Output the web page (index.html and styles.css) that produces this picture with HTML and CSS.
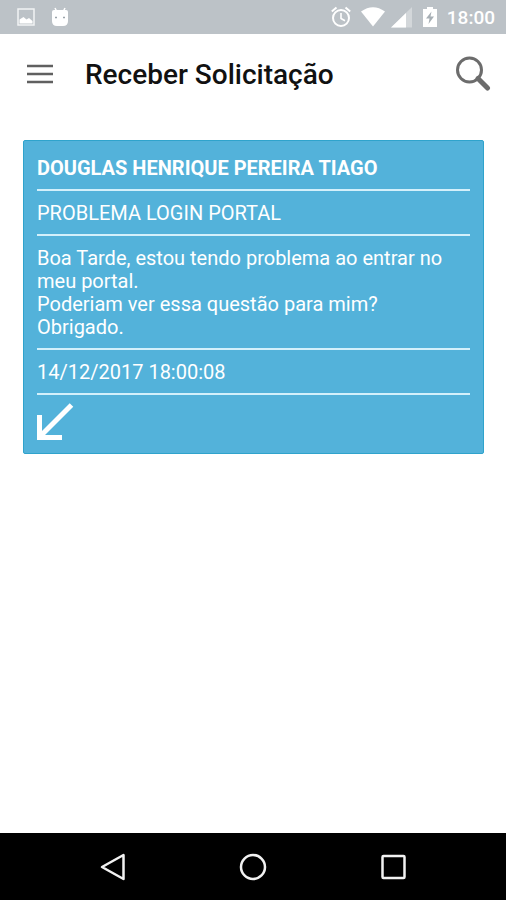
FILE: index.html
```html
<!DOCTYPE html>
<html lang="pt-BR">
<head>
<meta charset="utf-8">
<meta name="viewport" content="width=device-width, initial-scale=1">
<title>Receber Solicitação</title>
<link rel="stylesheet" href="styles.css">
</head>
<body>
<div class="status-bar">
  <div class="status-group notices">
    <svg width="18" height="18" viewBox="0 0 18 18" aria-hidden="true"><rect x="1" y="1" width="16" height="16" fill="none" stroke="currentColor" stroke-width="1.5" opacity=".8"/><path d="M2.500 15.500v-4l4-2.500 3 2.500 2.500-1.500 3.500 3v2.500z" fill="currentColor"/></svg>
    <svg width="18" height="20" viewBox="0 0 18 20" aria-hidden="true"><path d="M4 1l2 4M14 1l-2 4" stroke="currentColor" stroke-width="1.500"/><path d="M1 5q0-2 2-2h12q2 0 2 2v9q0 5-5 5H6q-5 0-5-5z" fill="currentColor"/><path d="M4 10.500h2M12 10.500h2" stroke="#9aa3aa" stroke-width="1.500"/></svg>
  </div>
  <div class="status-group">
    <svg width="20" height="22" viewBox="0 0 20 22" aria-hidden="true"><g fill="none" stroke="currentColor" stroke-width="2"><circle cx="10" cy="12" r="8"/><path d="M10 7v5.500l4 2.300" stroke-width="1.600"/><path d="M.8 5.500L5.500 1.500M19.200 5.500L14.500 1.500"/></g></svg>
    <svg class="wifi" width="24" height="20" viewBox="0 0 24 20" aria-hidden="true"><path d="M0 4.500Q12-4 24 4.500L12 19.500z" fill="currentColor"/></svg>
    <svg class="signal" width="22" height="21" viewBox="0 0 22 21" aria-hidden="true"><path d="M0 20.500L21 0v20.500z" fill="currentColor" opacity=".35"/><path d="M0 20.500L15 6v14.500z" fill="currentColor"/></svg>
    <svg class="battery" width="14" height="20" viewBox="0 0 14 20" aria-hidden="true"><path d="M4 0h6v2h4v18H0V2h4z" fill="currentColor"/><path d="M8.500 4.500L3 11.500h3.500L5.500 17 11 9.500H7.500z" fill="#a7afb5"/></svg>
    <time class="clock">18:00</time>
  </div>
</div>

<header class="app-bar">
  <button class="icon-button" type="button" aria-label="Menu">
    <svg width="26" height="20" viewBox="0 0 26 20"><path d="M0 2h26M0 10h26M0 18h26" stroke="#606060" stroke-width="2.400"/></svg>
  </button>
  <h1>Receber Solicitação</h1>
  <button class="icon-button" type="button" aria-label="Pesquisar">
    <svg width="36" height="36" viewBox="0 0 36 36"><g fill="none" stroke="#6c6c6c"><circle cx="14.500" cy="14" r="12" stroke-width="3"/><path d="M23 22.500L32.500 32" stroke-width="5" stroke-linecap="round"/></g></svg>
  </button>
</header>

<main>
  <article class="card">
    <h2 class="row name">DOUGLAS HENRIQUE PEREIRA TIAGO</h2>
    <p class="row">PROBLEMA LOGIN PORTAL</p>
    <p class="row">Boa Tarde, estou tendo problema ao entrar no meu portal.<br>Poderiam ver essa questão para mim?<br>Obrigado.</p>
    <p class="row"><time datetime="2017-12-14T18:00:08">14/12/2017 18:00:08</time></p>
    <button class="icon-button receive" type="button" aria-label="Receber">
      <svg width="37" height="37" viewBox="0 0 37 37"><path d="M34.500 2L4 32.500M2.500 12v22.500H25" fill="none" stroke="#fff" stroke-width="5"/></svg>
    </button>
  </article>
</main>

<nav class="system-nav" aria-label="Sistema">
  <button class="icon-button" type="button" aria-label="Voltar"><svg width="28" height="28" viewBox="0 0 28 28"><path d="M24.500 2v24L3 14z"/></svg></button>
  <button class="icon-button" type="button" aria-label="Início"><svg width="28" height="28" viewBox="0 0 28 28"><circle cx="14" cy="14" r="12"/></svg></button>
  <button class="icon-button" type="button" aria-label="Recentes"><svg width="28" height="28" viewBox="0 0 28 28"><rect x="3.500" y="3" width="22" height="22" rx="1"/></svg></button>
</nav>
</body>
</html>
```
FILE: styles.css
```css
* {
  box-sizing: border-box;
}

body {
  margin: 0;
  min-height: 100vh;
  display: flex;
  flex-direction: column;
  background: #fff;
  font-family: Roboto, "Liberation Sans", sans-serif;
  font-size: 20px;
  line-height: 23px;
}

svg {
  display: block;
}

h1,
h2,
p {
  margin: 0;
}

.icon-button {
  display: block;
  padding: 0;
  border: 0;
  background: none;
}

.status-bar {
  display: flex;
  align-items: center;
  justify-content: space-between;
  height: 34px;
  padding: 0 11px 0 17px;
  background: #bcc2c7;
  color: #fff;
}

.status-group {
  display: flex;
  align-items: center;
  gap: 10px;
}

.notices {
  gap: 16px;
}

.signal {
  margin-left: -4px;
}

.clock {
  font-size: 19px;
  font-weight: 500;
}

.app-bar {
  display: flex;
  align-items: center;
  height: 80px;
  padding: 0 15px 0 27px;
}

.app-bar h1 {
  flex: 1;
  padding: 2px 0 0 32px;
  color: #111;
  font-size: 28px;
  font-weight: 500;
  line-height: 32px;
}

main {
  flex: 1;
  padding: 26px 22px 26px 23px;
}

.card {
  padding: 5px 13px 13px;
  border: 1px solid #2fa3cc;
  border-radius: 2px;
  background: #53b2da;
  color: #fff;
}

.row {
  padding: 11px 0 9px;
  border-bottom: 2px solid #d3f0fb;
  font-size: 20px;
  font-weight: 400;
}

.name {
  font-weight: 700;
}

.receive {
  margin-top: 8px;
}

.system-nav {
  display: flex;
  justify-content: center;
  align-items: center;
  gap: 112px;
  height: 67px;
  background: #000;
}

.system-nav svg {
  fill: none;
  stroke: #f2f2f2;
  stroke-width: 2.5;
  stroke-linejoin: round;
}
```
